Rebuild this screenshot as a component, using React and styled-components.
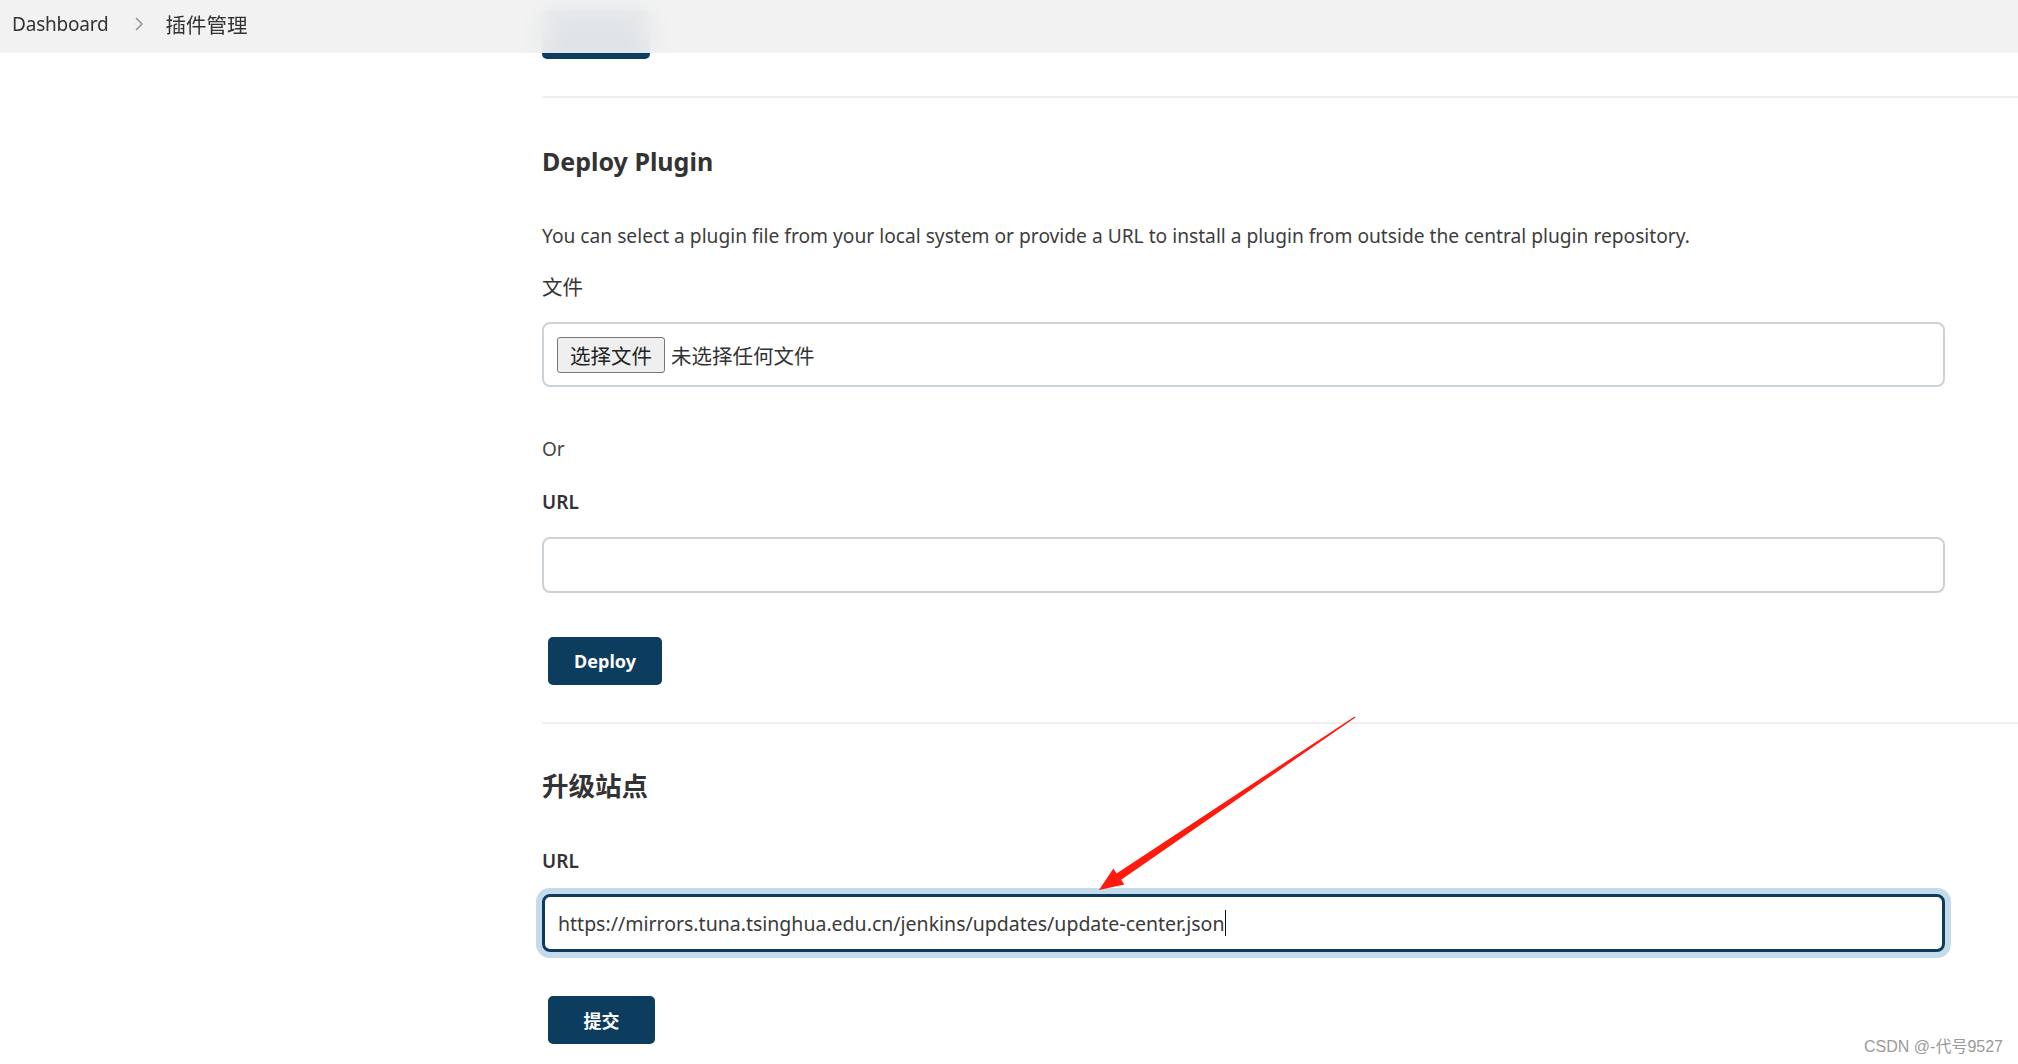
import React from "react";
import styled, { createGlobalStyle } from "styled-components";

const GlobalStyle = createGlobalStyle`
  html, body {
    margin: 0;
    padding: 0;
    background: #ffffff;
  }
  body {
    font-family: "Noto Sans", "Noto Sans CJK SC", sans-serif;
    color: #333333;
  }
`;

const App = () => {
  return (
    <Page>
      <GlobalStyle />
      <Header>
        <Crumb>Dashboard</Crumb>
        <Chevron viewBox="0 0 10 16">
          <polyline points="2,2 8,8 2,14" />
        </Chevron>
        <Crumb $cjk>插件管理</Crumb>
      </Header>

      <Main>
        <Section $top={11} $bottom={37}>
          <PrimaryButton $width={108}>&nbsp;</PrimaryButton>
        </Section>
        <Divider />

        <Section $top={46} $bottom={37}>
          <Heading>Deploy Plugin</Heading>
          <Description>
            You can select a plugin file from your local system or provide a URL to install a plugin from outside the
            central plugin repository.
          </Description>
          <Label $gap={25} $cjk>
            文件
          </Label>
          <FileBox>
            <FileButton>选择文件</FileButton>
            <FileStatus>未选择任何文件</FileStatus>
          </FileBox>
          <Plain>Or</Plain>
          <Label $gap={27} $bold>
            URL
          </Label>
          <TextInput />
          <ButtonRow>
            <PrimaryButton $width={114}>Deploy</PrimaryButton>
          </ButtonRow>
        </Section>
        <Divider />

        <Section $top={45} $bottom={19}>
          <Heading $cjk>升级站点</Heading>
          <Label $gap={45} $bold>
            URL
          </Label>
          <FocusInput>
            <InputText>https://mirrors.tuna.tsinghua.edu.cn/jenkins/updates/update-center.json</InputText>
            <Caret />
          </FocusInput>
          <ButtonRow>
            <PrimaryButton $width={107}>提交</PrimaryButton>
          </ButtonRow>
        </Section>
      </Main>

      <Arrow viewBox="1090 705 275 195">
        <polygon points="1355.4,717.5 1121.2,879.8 1124.4,884.6 1099,890 1113.4,868.6 1116.6,873.4 1354.6,716.5" />
      </Arrow>
      <Watermark>CSDN @-代号9527</Watermark>
    </Page>
  );
};

const Page = styled.div`
  position: relative;
  width: 2018px;
  height: 1064px;
  overflow: hidden;
  background: #ffffff;
`;

const Header = styled.div`
  position: absolute;
  top: 0;
  left: 0;
  right: 0;
  height: 53px;
  z-index: 2;
  box-sizing: border-box;
  display: flex;
  align-items: center;
  padding: 0 0 6px 12px;
  background: rgba(241, 241, 241, 0.93);
  backdrop-filter: blur(14px);
`;

const Crumb = styled.span`
  font-size: ${(p) => (p.$cjk ? "20.5px" : "19px")};
  color: #333333;
  letter-spacing: ${(p) => (p.$cjk ? "0" : "-0.2px")};
`;

const Chevron = styled.svg`
  width: 10px;
  height: 16px;
  margin: 0 22px 0 25px;
  fill: none;
  stroke: #8a8a8a;
  stroke-width: 1.4;
`;

const Main = styled.div`
  padding-left: 542px;
`;

const Section = styled.div`
  padding-top: ${(p) => p.$top}px;
  padding-bottom: ${(p) => p.$bottom}px;
  display: flex;
  flex-direction: column;
  align-items: flex-start;
`;

const Divider = styled.div`
  height: 2px;
  background: #efefef;
`;

const Heading = styled.h2`
  margin: 0;
  font-size: ${(p) => (p.$cjk ? "26.5px" : "25px")};
  line-height: 34px;
  font-weight: 700;
  color: #333333;
`;

const Description = styled.p`
  margin: 45px 0 0;
  font-size: 19.2px;
  line-height: 26px;
  color: #3d3d3d;
`;

const Label = styled.div`
  margin-top: ${(p) => p.$gap}px;
  font-size: ${(p) => (p.$cjk ? "20.5px" : "19px")};
  line-height: 26px;
  font-weight: ${(p) => (p.$bold ? 600 : 400)};
  color: #333333;
`;

const Plain = styled.div`
  margin-top: 49px;
  font-size: 19px;
  line-height: 26px;
  color: #444444;
`;

const FileBox = styled.div`
  box-sizing: border-box;
  margin-top: 22px;
  width: 1403px;
  height: 65px;
  display: flex;
  align-items: center;
  gap: 6px;
  padding-left: 13px;
  border: 2px solid #cbd2d8;
  border-radius: 8px;
`;

const FileButton = styled.div`
  box-sizing: border-box;
  height: 36px;
  width: 108px;
  display: flex;
  align-items: center;
  justify-content: center;
  font-size: 20.5px;
  color: #222222;
  background: #efefef;
  border: 1px solid #767676;
  border-radius: 3px;
`;

const FileStatus = styled.span`
  font-size: 20.5px;
  color: #333333;
`;

const TextInput = styled.div`
  box-sizing: border-box;
  margin-top: 22px;
  width: 1403px;
  height: 56px;
  border: 2px solid #cbd2d8;
  border-radius: 8px;
`;

const FocusInput = styled.div`
  box-sizing: border-box;
  margin-top: 20px;
  width: 1403px;
  height: 58px;
  display: flex;
  align-items: center;
  padding-left: 13px;
  border: 3px solid #0e3b5a;
  border-radius: 8px;
  box-shadow: 0 0 0 6px #c3dbea;
`;

const InputText = styled.span`
  font-size: 19.5px;
  color: #3a3a3a;
`;

const Caret = styled.span`
  width: 1px;
  height: 26px;
  margin-left: 1px;
  background: #111111;
`;

const ButtonRow = styled.div`
  margin-top: 44px;
  padding-left: 6px;
`;

const PrimaryButton = styled.div`
  width: ${(p) => p.$width}px;
  height: 48px;
  display: flex;
  align-items: center;
  justify-content: center;
  font-size: 18px;
  font-weight: 700;
  color: #ffffff;
  background: #0c3c5e;
  border-radius: 5px;
`;

const Arrow = styled.svg`
  position: absolute;
  left: 1090px;
  top: 705px;
  width: 275px;
  height: 195px;
  fill: #ff1a0d;
`;

const Watermark = styled.div`
  position: absolute;
  right: 15px;
  bottom: 7px;
  font-family: "Liberation Sans", "Noto Sans CJK SC", sans-serif;
  font-size: 16px;
  color: #9a9a9a;
`;

export default App;
